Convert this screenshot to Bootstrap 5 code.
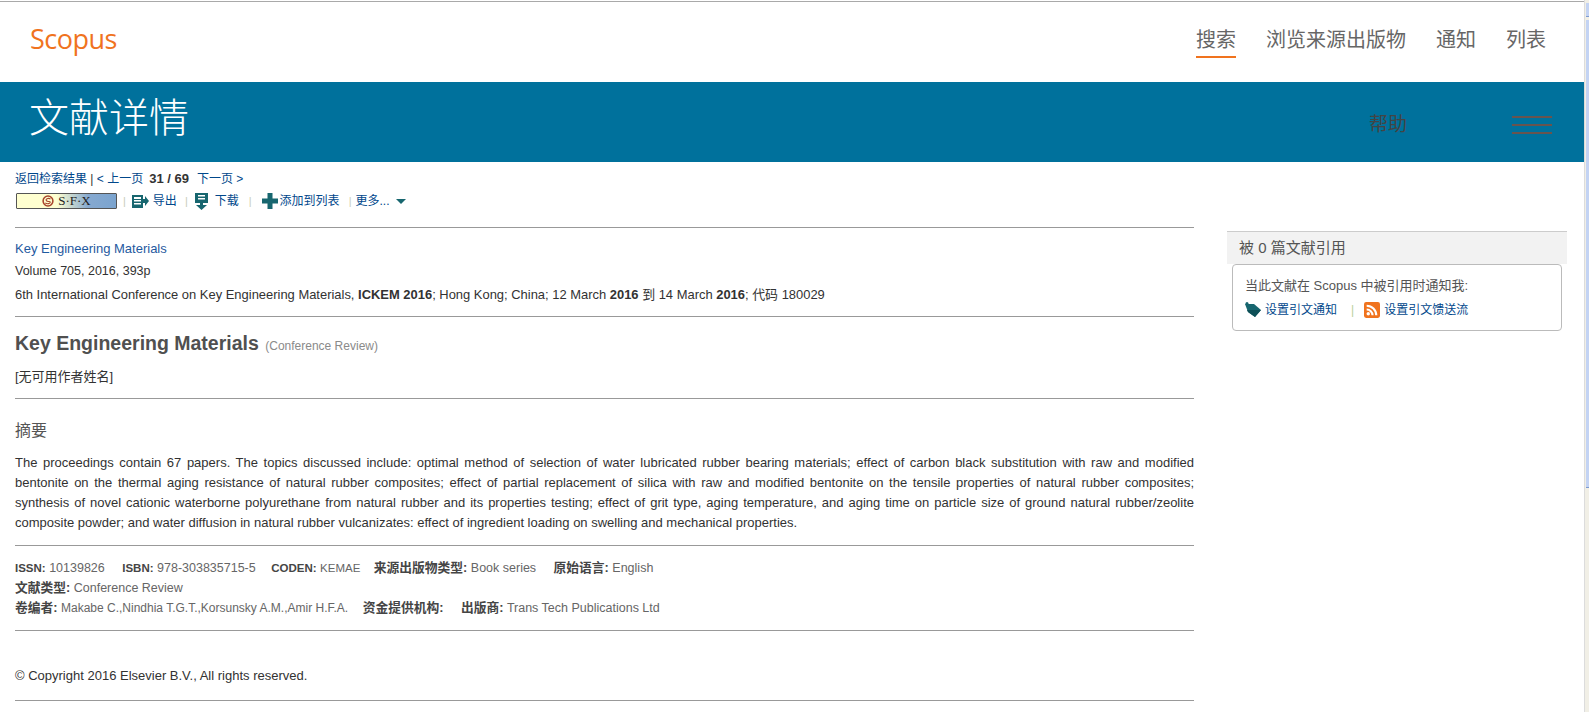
<!DOCTYPE html>
<html lang="zh">
<head>
<meta charset="utf-8">
<link href="https://cdn.jsdelivr.net/npm/bootstrap@5.3.0/dist/css/bootstrap.min.css" rel="stylesheet">
<style>
html,body{height:712px;overflow:hidden}
body{font-family:"Liberation Sans","Noto Sans CJK SC",sans-serif;font-size:13px;color:#323232;background:#fff}
a{color:#00478b;text-decoration:none}
.pg-shell{height:712px}
.pg-main{width:1584px;flex:none;border-top:1px solid #a9a9a9;margin-top:1px}
.sb-strip{width:5px;flex:none;background:#f1efe6;border-left:1px solid #dcdcdc;padding-left:1px}
.sb-up{height:14px;margin-top:3px;background:#c3d3f3;border-bottom:1px solid #7d9ad0}
.sb-thumb{height:468px;margin-top:3px;background:#c3d3f3;border-bottom:1px solid #7d9ad0}
.top-head{height:80px;padding:0 38px 0 30px}
.sc-logo{font-family:"Open Sans",sans-serif;font-size:27px;letter-spacing:-.5px;color:#f0731e;line-height:1;margin-top:-7px}
.top-nav{gap:30px;font-size:20px;margin-top:-6px}
.top-nav a{color:#666;display:block;line-height:24px;padding-bottom:4px;border-bottom:2px solid transparent;margin-top:8px}
.top-nav a.on{border-bottom-color:#f0731e}
.band{height:80px;background:#00719c;padding:0 32px 0 29px}
.band h1{font-size:40px;font-family:"Noto Sans CJK SC",serif;font-weight:300;color:#fff;margin:0;line-height:67px}
.help-t{font-size:19px;color:#444;margin-right:105px;margin-top:7px}
.burger{width:40px}
.burger i{display:block;height:2px;background:#69544e;margin-top:6px}
.pg-body{padding-left:15px}
.col-l{width:1179px;flex:none}
.col-r{width:340px;flex:none;margin-left:33px;padding-top:69px}
.crumb{line-height:16px;padding-top:9px;font-size:12px}
.crumb .sep{color:#333}
.crumb b{color:#333;margin:0 8px 0 6px;font-size:13px}
.tools{height:20px;margin-top:4px;line-height:20px;font-size:12px}
.sfx-b{width:101px;height:16px;margin-left:1px;border:1px solid #555;border-radius:1px;background:linear-gradient(90deg,#ffffd0 0,#ffffd0 40%,#86a9d0 72%,#7ba4cf 100%);font-family:"Liberation Serif",serif;font-size:13px;color:#222;line-height:14px}
.vbar{color:#c9cdb8;font-size:11px}
.v-a{margin:0 6px}
.v-b{margin:0 6px 0 8px}
.v-c{margin:0 10px}
.v-d{margin:0 4px 0 9px}
.t-dl{margin-left:6px}
.t-add{margin-left:2px}
.t-ar{margin-left:6px}
.rule{height:1px;background:#999;margin:0;border:0;opacity:1}
.src-l{line-height:23px;padding:9px 0 10px}
.src-l a{color:#1f5aa0}
.vol-l{font-size:12.5px}
.conf-l{font-size:12.95px}
.art-t{font-size:19.5px;font-weight:700;color:#505050;line-height:28px;margin:0;padding-top:12px}
.art-t small{font-size:12px;font-weight:400;color:#8a8a8a;margin-left:1px}
.anon-l{padding:7px 0 11px;line-height:20px}
.sum-h{font-size:16px;font-weight:400;color:#555;line-height:20px;margin:0;padding-top:22px}
.sum-p{line-height:20px;text-align:justify;margin:0;padding-top:12px;font-size:13px}
.hr-gap{margin-top:12px}
.meta-l{line-height:20px;color:#666;font-size:12.5px;padding:12px 0 12px}
.meta-l b{color:#454545;font-size:12.75px}
.meta-l b.lat{font-size:11.5px}
.meta-l span{margin-right:14px}
.meta-l .m-isbn{margin-right:12px}
.meta-l .m-cod{margin-right:10px}
.meta-l .m-kem{font-size:11.5px;margin:0}
.meta-l .ed-n{font-size:12px;margin:0}
.meta-l .m-ed{margin-right:11px}
.copy-l{padding:35px 0 14px;line-height:20px;font-size:13px}
.cite-h{background:#f2f2f2;border-top:1px solid #ccc;font-size:15px;color:#555;height:33px;line-height:32px;padding-left:12px}
.cite-box{margin:0 5px;border:1px solid #bbb;border-radius:4px;height:67px;padding:11px 12px 0 12px;line-height:20px;color:#555;font-size:13px}
.cite-row{font-size:12px}
.cite-sep{color:#b9cf9c;margin:0 10px 0 14px}
</style>
</head>
<body>
<div class="pg-shell d-flex">
<div class="pg-main">
  <header class="top-head d-flex justify-content-between align-items-center">
    <div class="sc-logo">Scopus</div>
    <nav class="top-nav d-flex">
      <a class="on" href="#">搜索</a><a href="#">浏览来源出版物</a><a href="#">通知</a><a href="#">列表</a>
    </nav>
  </header>
  <div class="band d-flex justify-content-between">
    <h1>文献详情</h1>
    <div class="d-flex align-items-center">
      <span class="help-t">帮助</span>
      <div class="burger"><i></i><i></i><i></i></div>
    </div>
  </div>
  <div class="pg-body d-flex">
    <main class="col-l">
      <div class="crumb"><a href="#">返回检索结果</a> <span class="sep">|</span> <a href="#">&lt; 上一页</a><b>31 / 69</b><a href="#">下一页 &gt;</a></div>
      <div class="tools d-flex align-items-center">
        <span class="sfx-b d-flex justify-content-center align-items-center gap-1">
          <svg width="12" height="12" viewBox="0 0 11 11"><circle cx="5.500" cy="5.500" r="4.500" fill="none" stroke="#a8442c" stroke-width="1.400"/><path d="M7.800 3.600C5.500 2.400 3 3.800 4 5.200s3.400 0 3.600 1.300c.2 1.400-2.800 2-4.600.9" fill="none" stroke="#a8442c"/></svg>
          <span>S·F·X</span>
        </span>
        <span class="vbar v-a">|</span>
        <svg width="17" height="13" viewBox="0 0 17 13"><path fill="#17666f" d="M0 0h11v4h2V1l4 5-4 5V8h-2v5H0zM2 2v2h7V2zm0 3v1.500h7V5zm0 3v1.500h7V8z"/></svg>
        <a class="ms-1" href="#">导出</a>
        <span class="vbar v-b">|</span>
        <svg width="15" height="17" viewBox="0 0 15 17"><path fill="#17666f" d="M1 0h13v10H9v2h4l-5.500 5L2 12h4v-2H1zM4 2v1.500h7V2zm0 3v1.500h7V5z"/></svg>
        <a class="t-dl" href="#">下载</a>
        <span class="vbar v-c">|</span>
        <svg width="16" height="16" viewBox="0 0 16 16"><path fill="#17666f" d="M5.500 0h5v5.500H16v5h-5.500V16h-5v-5.500H0v-5h5.500z"/></svg>
        <a class="t-add" href="#">添加到列表</a>
        <span class="vbar v-d">|</span>
        <a href="#">更多...</a>
        <svg class="t-ar" width="10" height="5" viewBox="0 0 10 5"><path fill="#17666f" d="M0 0h10L5 5z"/></svg>
      </div>
      <hr class="rule mt-3">
      <div class="src-l">
        <div><a href="#">Key Engineering Materials</a></div>
        <div class="vol-l">Volume 705, 2016, 393p</div>
        <div class="conf-l">6th International Conference on Key Engineering Materials, <b>ICKEM 2016</b>; Hong Kong; China; 12 March <b>2016</b> 到 14 March <b>2016</b>; 代码 180029</div>
      </div>
      <hr class="rule">
      <h2 class="art-t">Key Engineering Materials <small>(Conference Review)</small></h2>
      <div class="anon-l">[无可用作者姓名]</div>
      <hr class="rule">
      <h3 class="sum-h">摘要</h3>
      <p class="sum-p">The proceedings contain 67 papers. The topics discussed include: optimal method of selection of water lubricated rubber bearing materials; effect of carbon black substitution with raw and modified bentonite on the thermal aging resistance of natural rubber composites; effect of partial replacement of silica with raw and modified bentonite on the tensile properties of natural rubber composites; synthesis of novel cationic waterborne polyurethane from natural rubber and its properties testing; effect of grit type, aging temperature, and aging time on particle size of ground natural rubber/zeolite composite powder; and water diffusion in natural rubber vulcanizates: effect of ingredient loading on swelling and mechanical properties.</p>
      <hr class="rule hr-gap">
      <div class="meta-l">
        <div><span><b class="lat">ISSN:</b> 10139826</span> <span class="m-isbn"><b class="lat">ISBN:</b> 978-303835715-5</span> <span class="m-cod"><b class="lat">CODEN:</b> <span class="m-kem">KEMAE</span></span> <span><b>来源出版物类型:</b> Book series</span> <span><b>原始语言:</b> English</span></div>
        <div><b>文献类型:</b> Conference Review</div>
        <div><span class="m-ed"><b>卷编者:</b> <span class="ed-n">Makabe C.,Nindhia T.G.T.,Korsunsky A.M.,Amir H.F.A.</span></span> <span><b>资金提供机构:</b></span> <span><b>出版商:</b> Trans Tech Publications Ltd</span></div>
      </div>
      <hr class="rule">
      <div class="copy-l">© Copyright 2016 Elsevier B.V., All rights reserved.</div>
      <hr class="rule">
    </main>
    <aside class="col-r">
      <div class="cite-h">被 0 篇文献引用</div>
      <div class="cite-box">
        <div>当此文献在 Scopus 中被引用时通知我:</div>
        <div class="cite-row d-flex align-items-center mt-1">
          <svg width="16" height="16" viewBox="0 0 16 16"><circle cx="2" cy="1.500" r="1.500" fill="#17666f"/><path fill="#17666f" d="M0 2h9l7 6-6 7-7-5z"/><path fill="#0d4f56" d="M2 8l14 0-6 7-7-5z"/></svg>
          <a class="ms-1" href="#">设置引文通知</a>
          <span class="cite-sep">|</span>
          <svg width="16" height="16" viewBox="0 0 15 15"><rect width="15" height="15" rx="2" fill="#f0731e"/><circle cx="4" cy="11" r="1.600" fill="#fff"/><path d="M2.500 7a5.500 5.500 0 0 1 5.500 5.500M2.500 3.500a9 9 0 0 1 9 9" fill="none" stroke="#fff" stroke-width="2"/></svg>
          <a class="ms-1" href="#">设置引文馈送流</a>
        </div>
      </div>
    </aside>
  </div>
</div>
<div class="sb-strip"><div class="sb-up"></div><div class="sb-thumb"></div></div>
</div>
<script src="https://cdn.jsdelivr.net/npm/bootstrap@5.3.0/dist/js/bootstrap.bundle.min.js"></script>
</body>
</html>
